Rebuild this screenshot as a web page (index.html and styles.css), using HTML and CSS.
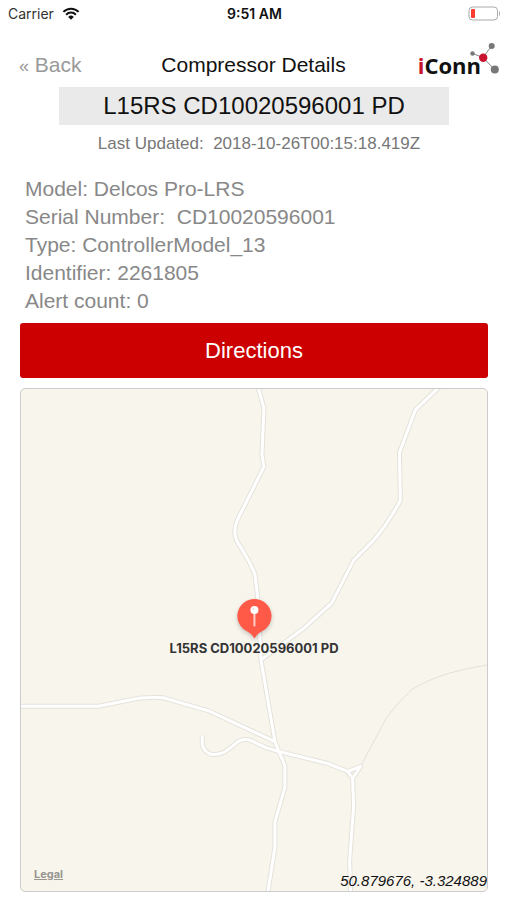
FILE: index.html
```html
<!DOCTYPE html>
<html lang="en">
<head>
<meta charset="utf-8">
<meta name="viewport" content="width=device-width, initial-scale=1">
<title>Compressor Details</title>
<link rel="stylesheet" href="styles.css">
</head>
<body>
<div class="status-bar">
  <div class="carrier">
    <span>Carrier</span>
    <svg class="wifi" viewBox="0 0 18 13" width="18" height="13" aria-hidden="true">
      <path d="M1.4 4.9a10.6 10.6 0 0 1 15.2 0" />
      <path d="M4.1 7.7a6.8 6.8 0 0 1 9.8 0" />
      <path class="wifi-dot" d="M6.2 9.9a4 4 0 0 1 5.6 0L9 12.8z" />
    </svg>
  </div>
  <span class="clock">9:51 AM</span>
  <svg class="battery" viewBox="0 0 33 15" width="33" height="15" aria-hidden="true">
    <rect class="battery-case" x="1" y="1" width="28.500" height="13" rx="3.500" />
    <rect class="battery-level" x="3" y="3" width="4" height="9" rx="1" />
    <path class="battery-tip" d="M31 5c1.300.6 1.300 4.400 0 5z" />
  </svg>
</div>

<header class="nav">
  <a class="back" href="#"><span class="chevron">«</span> Back</a>
  <h1 class="title">Compressor Details</h1>
  <div class="logo">
    <span class="logo-text"><span class="logo-i">i</span>Conn</span>
    <svg class="logo-nodes" viewBox="0 0 30 32" width="30" height="32" aria-hidden="true">
      <path d="M3.500 11.500 14 15.500 22.500 4 M14 15.500 25.500 27.500" />
      <circle cx="3.500" cy="11.500" r="2.200" />
      <circle cx="22.700" cy="4" r="3" />
      <circle cx="25.800" cy="27.500" r="4" />
      <circle class="hub" cx="14.200" cy="15.700" r="4.200" />
    </svg>
  </div>
</header>

<main class="content">
  <h2 class="unit-name">L15RS CD10020596001 PD</h2>
  <p class="updated">Last Updated:&nbsp; 2018-10-26T00:15:18.419Z</p>
  <ul class="details">
    <li>Model: Delcos Pro-LRS</li>
    <li>Serial Number:&nbsp; CD10020596001</li>
    <li>Type: ControllerModel_13</li>
    <li>Identifier: 2261805</li>
    <li>Alert count: 0</li>
  </ul>
  <button class="directions" type="button">Directions</button>
  <section class="map" aria-label="Map">
    <svg class="roads" viewBox="20 388 468 504" preserveAspectRatio="xMidYMid slice" aria-hidden="true">
      <defs>
        <g id="road-lines">
          <path d="M258 386 264 407 262 454 264 466 238 518Q232 530 237 541L249 561 255 574 258 600 261 660 275 742 279 752 285 766V788L275 823V848L268 893" />
          <path d="M440 386 416 409 400 452 401 500Q386 527 373 541L354 560 332 603 303 629 261 660" />
          <path d="M18 706.500H98L138 698.500Q152 697 163 698L208 711 275 742" />
          <path d="M202 736V745Q204 753 212 755Q222 755 228 750L238 742Q244 738.500 251 741L266 748 279 752 328 764 348 772 361 767 353 779 354 807 350 862 351 893" />
          <path d="M348 772 353 779" />
        </g>
      </defs>
      <path class="track" d="M361 767 387 718Q400 701 412 690Q428 680 451 673Q470 668 488 665" />
      <use class="road-edge" href="#road-lines" />
      <use class="road-fill" href="#road-lines" />
    </svg>
    <div class="marker">
      <svg class="pin" viewBox="0 0 44 46" width="44" height="46" aria-hidden="true">
        <path class="pin-body" d="M22 2a17 17 0 0 1 7.500 32.300c-3.400 1.900-5.500 4-7.500 7.200-2-3.200-4.100-5.300-7.500-7.200A17 17 0 0 1 22 2z" />
        <path class="pin-needle" d="M22 16v12.500" />
        <circle class="pin-head" cx="22" cy="13" r="4" />
        <circle class="pin-shine" cx="21" cy="12" r="1" />
      </svg>
      <span class="marker-label">L15RS CD10020596001 PD</span>
    </div>
    <div class="map-footer">
      <a class="legal" href="#">Legal</a>
      <span class="coords">50.879676, -3.324889</span>
    </div>
  </section>
</main>
</body>
</html>
```

FILE: styles.css
```css
* {
  box-sizing: border-box;
}

body {
  margin: 0;
  min-height: 100vh;
  display: flex;
  flex-direction: column;
  background: #fff;
  color: #111;
  font-family: "Liberation Sans", Arial, sans-serif;
}

h1, h2, p, ul {
  margin: 0;
  padding: 0;
  font-weight: 400;
}

a {
  color: inherit;
  text-decoration: none;
}

.status-bar {
  display: grid;
  grid-template-columns: 1fr auto 1fr;
  align-items: center;
  height: 26px;
  padding: 0 6px 0 8px;
  font-family: Inter, sans-serif;
  font-size: 14px;
}

.carrier {
  display: flex;
  align-items: center;
  gap: 8px;
  color: #333;
}

.wifi {
  fill: none;
  stroke: #111;
  stroke-width: 2;
}

.wifi-dot {
  fill: #111;
  stroke: none;
}

.clock {
  font-weight: 600;
}

.battery {
  justify-self: end;
}

.battery-case {
  fill: none;
  stroke: #aaa;
}

.battery-level {
  fill: #ff3b30;
}

.battery-tip {
  fill: #aaa;
}

.nav {
  display: grid;
  grid-template-columns: 1fr auto 1fr;
  align-items: center;
  height: 61px;
  padding: 16px 8px 0;
}

.back {
  padding-left: 11px;
  color: #999;
  font-size: 21px;
}

.chevron {
  font-size: 18px;
}

.title {
  font-size: 21px;
}

.logo {
  position: relative;
  justify-self: end;
  padding-right: 18px;
}

.logo-text {
  font-family: "Open Sans", sans-serif;
  font-size: 22px;
  font-weight: 700;
}

.logo-i {
  color: #c8142f;
}

.logo-nodes {
  position: absolute;
  right: 0;
  top: -8px;
  fill: #777;
  stroke: none;
}

.logo-nodes path {
  fill: none;
  stroke: #888;
  stroke-width: 1;
}

.logo-nodes .hub {
  fill: #c8142f;
}

.content {
  flex: 1;
  display: flex;
  flex-direction: column;
  padding: 0 19px 8px 20px;
}

.unit-name {
  margin: 0 39px;
  background: #eaeaea;
  font-size: 24px;
  line-height: 38px;
  text-align: center;
}

.updated {
  margin-top: 8px;
  padding-left: 10px;
  color: #777;
  font-size: 17px;
  line-height: 22px;
  text-align: center;
}

.details {
  margin-top: 20px;
  padding-left: 5px;
  color: #888;
  font-size: 21px;
  line-height: 28px;
  list-style: none;
}

.directions {
  height: 55px;
  margin-top: 8px;
  border: 0;
  border-radius: 3px;
  background: #c00;
  color: #fff;
  font: 22px "Liberation Sans", Arial, sans-serif;
}

.map {
  position: relative;
  flex: 1;
  display: flex;
  flex-direction: column;
  justify-content: flex-end;
  min-height: 320px;
  margin-top: 10px;
  overflow: hidden;
  border: 1px solid #ccc;
  border-radius: 5px;
  background: #f8f5ed;
}

.roads {
  position: absolute;
  inset: 0;
  width: 100%;
  height: 100%;
  fill: none;
  stroke-linejoin: round;
}

.track {
  stroke: #e4e0d9;
  stroke-width: 1;
}

.road-edge {
  stroke: #e5e2db;
  stroke-width: 5;
}

.road-fill {
  stroke: #fff;
  stroke-width: 3;
}

.marker {
  position: absolute;
  top: 50%;
  left: 50%;
  display: flex;
  flex-direction: column;
  align-items: center;
  transform: translate(-50%, -43px);
}

.pin {
  filter: drop-shadow(0 2px 2px #0003);
}

.pin-body {
  fill: #ff5a48;
}

.pin-needle {
  fill: none;
  stroke: #ffd0c8;
  stroke-width: 2;
  stroke-linecap: round;
}

.pin-head {
  fill: #fff;
}

.pin-shine {
  fill: #e5dcd8;
}

.marker-label {
  margin-top: -3px;
  color: #333;
  font-family: Inter, sans-serif;
  font-size: 13px;
  font-weight: 700;
  line-height: 16px;
  white-space: nowrap;
}

.map-footer {
  position: relative;
  display: flex;
  align-items: flex-end;
  justify-content: space-between;
  padding: 0 0 2px 13px;
}

.legal {
  padding-bottom: 8px;
  color: #999691;
  font-family: Inter, sans-serif;
  font-size: 11px;
  font-weight: 700;
  line-height: 14px;
  text-decoration: underline;
}

.coords {
  font-size: 15px;
  font-style: italic;
}
```
